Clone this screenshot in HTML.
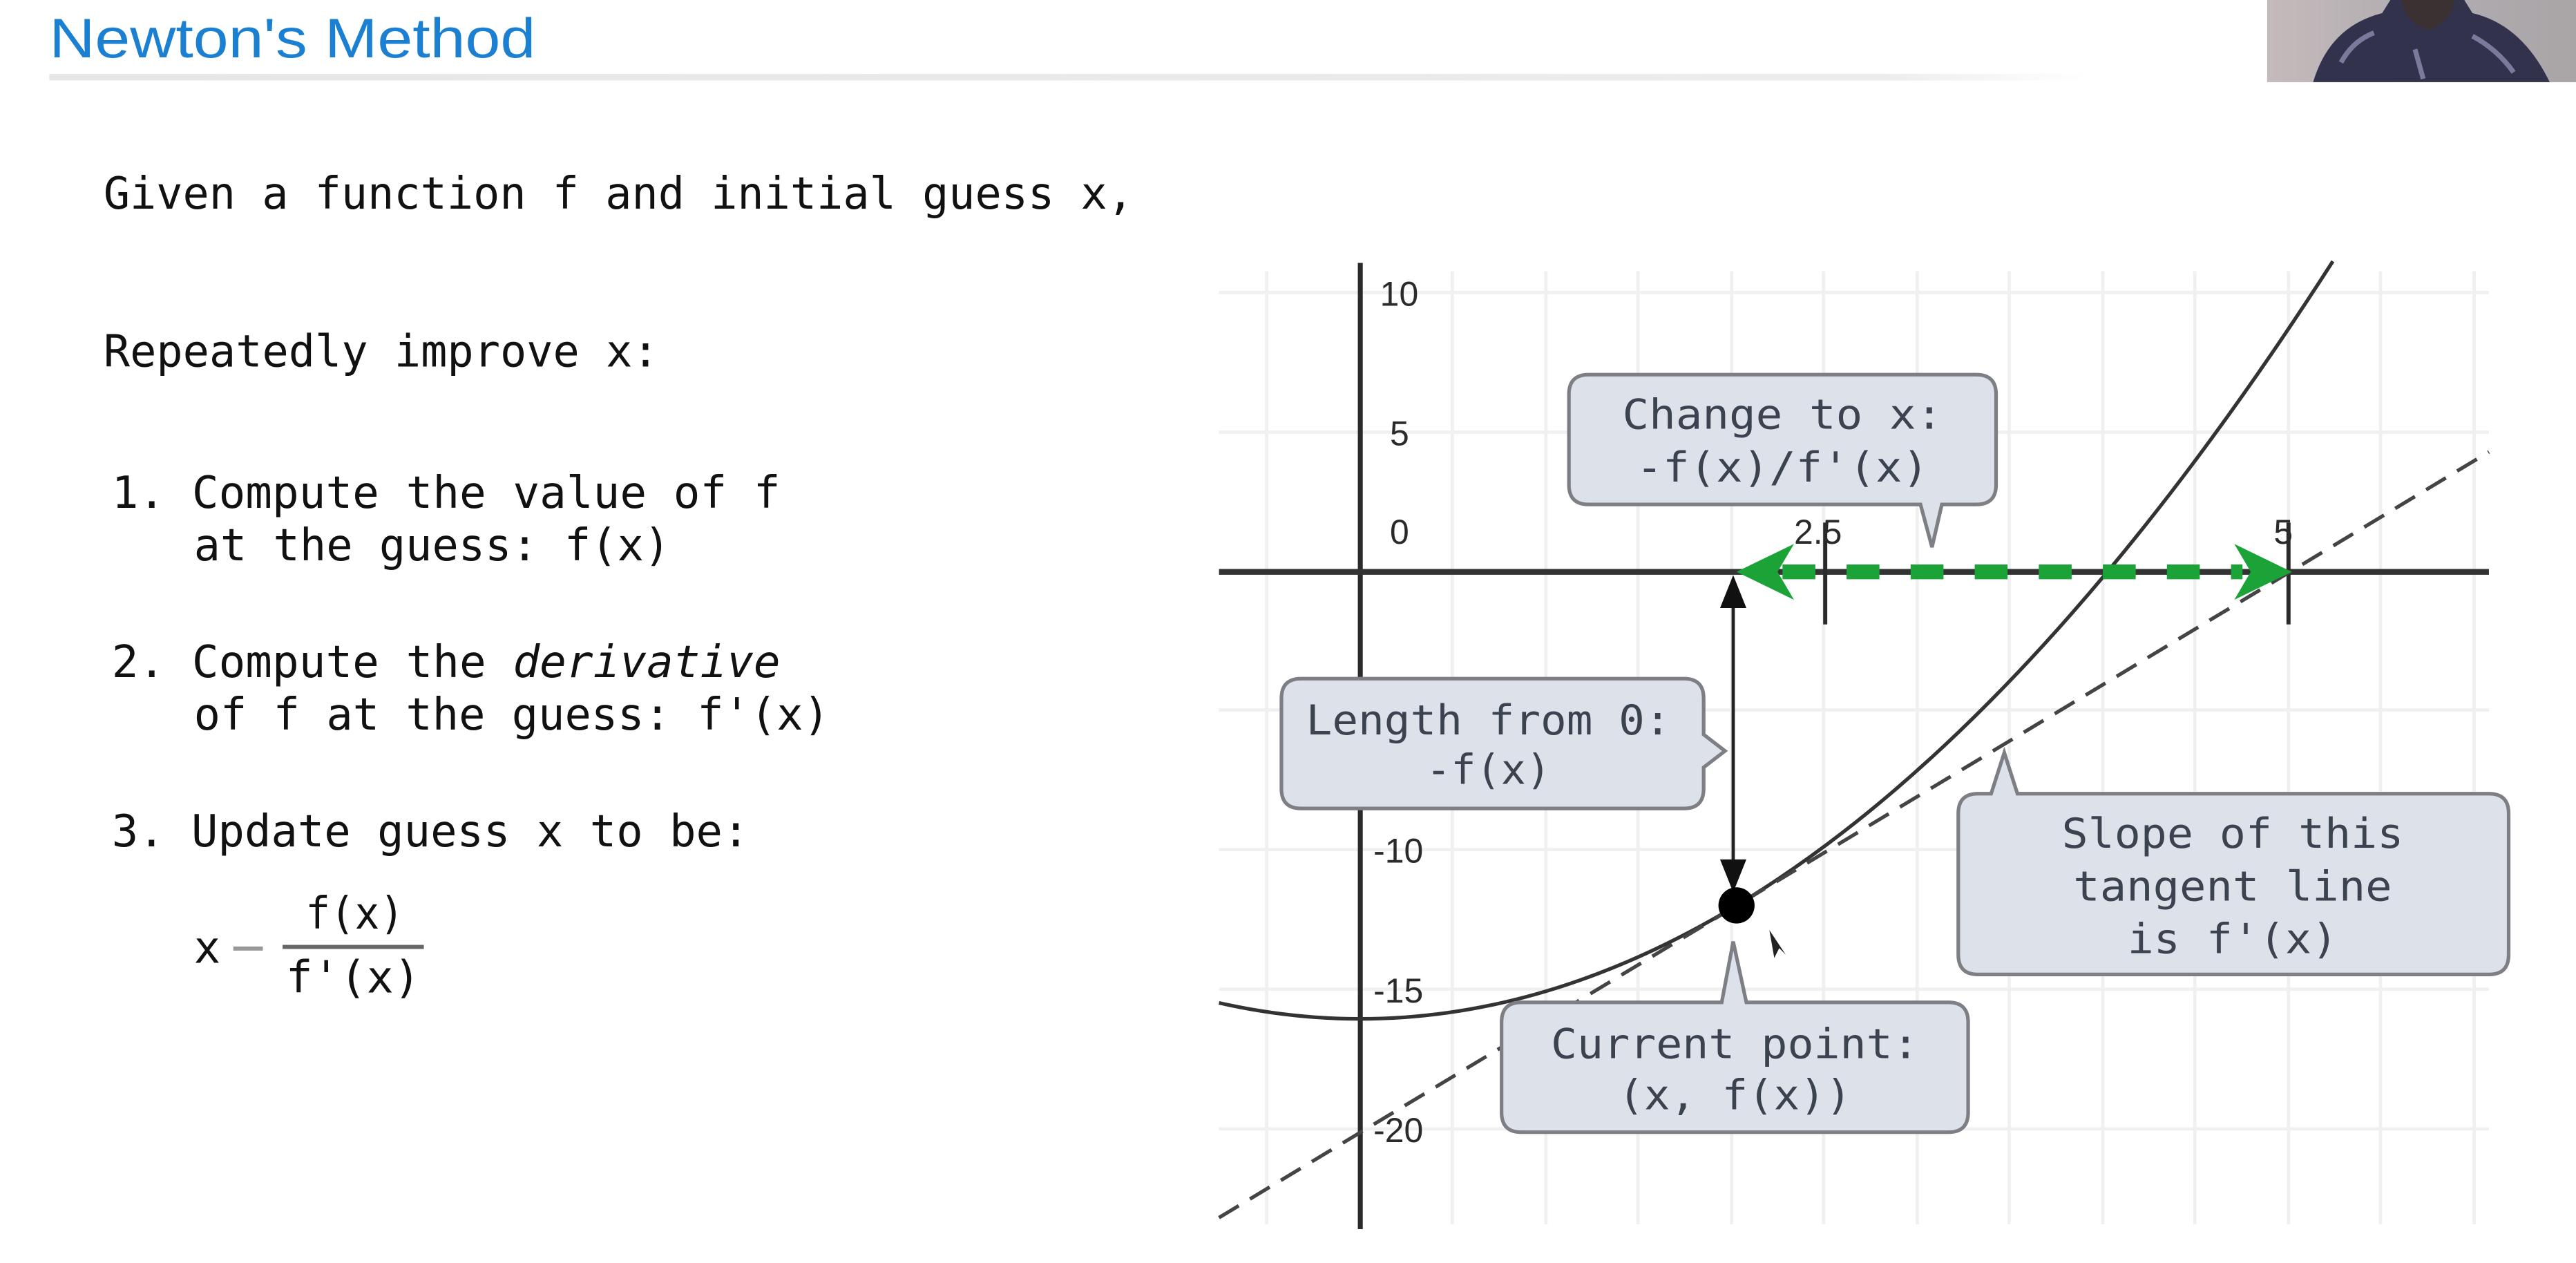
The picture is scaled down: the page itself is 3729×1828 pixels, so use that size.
<!DOCTYPE html>
<html><head><meta charset="utf-8"><style>
html,body{margin:0;padding:0;background:#fff;width:3729px;height:1828px;overflow:hidden}
svg{display:block}
.m{font-family:"DejaVu Sans Mono","Liberation Mono",monospace;fill:#111}
.b{font-family:"DejaVu Sans Mono","Liberation Mono",monospace;fill:#3c4350;font-size:25px}
.a{font-family:"Liberation Sans",sans-serif;fill:#2a2a2a;font-size:21px}
.box{fill:#dde1ea;stroke:#7d7f84;stroke-width:2.2}
</style></head><body>
<svg width="3729" height="1828" viewBox="0 0 1568 768.6" preserveAspectRatio="none" xmlns="http://www.w3.org/2000/svg">
<defs>
<linearGradient id="ln" x1="0" x2="1"><stop offset="0" stop-color="#e6e6e6"/><stop offset="0.9" stop-color="#ececec"/><stop offset="1" stop-color="#fff"/></linearGradient>
<linearGradient id="cam" x1="0" x2="1"><stop offset="0" stop-color="#c4babb"/><stop offset="0.5" stop-color="#b0acb0"/><stop offset="1" stop-color="#a9a5a7"/></linearGradient>
</defs>
<text x="30" y="35" font-family="Liberation Sans,sans-serif" font-size="34" fill="#1b7fd2" textLength="296" lengthAdjust="spacingAndGlyphs">Newton's Method</text>
<rect x="30" y="45" width="1240" height="4" fill="url(#ln)"/>
<rect x="1380" y="0" width="188" height="50" fill="url(#cam)"/>
<path d="M1455,0 H1500 L1505,8 Q1535,15 1552,50 H1408 Q1418,16 1450,8 Z" fill="#33324d"/>
<path d="M1462,0 H1494 Q1492,14 1478,18 Q1464,14 1462,0 Z" fill="#3b3132"/>
<path d="M1425,38 Q1432,25 1445,20 M1505,22 Q1520,30 1530,44 M1470,30 L1475,48" stroke="#7a7a9c" stroke-width="3" fill="none"/>
<g class="m" font-size="27">
<text x="63" y="127" textLength="627" lengthAdjust="spacingAndGlyphs">Given a function f and initial guess x,</text>
<text x="63" y="223" textLength="338" lengthAdjust="spacingAndGlyphs">Repeatedly improve x:</text>
<text x="68" y="309" textLength="407" lengthAdjust="spacingAndGlyphs">1. Compute the value of f</text>
<text x="118" y="341" textLength="290" lengthAdjust="spacingAndGlyphs">at the guess: f(x)</text>
<text x="68" y="412" textLength="407" lengthAdjust="spacingAndGlyphs">2. Compute the <tspan font-style="italic">derivative</tspan></text>
<text x="118" y="444" textLength="387" lengthAdjust="spacingAndGlyphs">of f at the guess: f'(x)</text>
<text x="68" y="515" textLength="388" lengthAdjust="spacingAndGlyphs">3. Update guess x to be:</text>
<text x="118" y="586">x</text>
<text x="186" y="565" textLength="60" lengthAdjust="spacingAndGlyphs">f(x)</text>
<text x="174" y="604" textLength="82" lengthAdjust="spacingAndGlyphs">f'(x)</text>
</g>
<rect x="142" y="576" width="18" height="2.5" fill="#999"/>
<rect x="172" y="575" width="86" height="2.5" fill="#666"/>
<g stroke="#f0f0f0" stroke-width="2">
<line x1="771" y1="165" x2="771" y2="745"/><line x1="884" y1="165" x2="884" y2="745"/><line x1="941" y1="165" x2="941" y2="745"/><line x1="997" y1="165" x2="997" y2="745"/><line x1="1054" y1="165" x2="1054" y2="745"/><line x1="1110" y1="165" x2="1110" y2="745"/><line x1="1167" y1="165" x2="1167" y2="745"/><line x1="1223" y1="165" x2="1223" y2="745"/><line x1="1280" y1="165" x2="1280" y2="745"/><line x1="1336" y1="165" x2="1336" y2="745"/><line x1="1393" y1="165" x2="1393" y2="745"/><line x1="1449" y1="165" x2="1449" y2="745"/><line x1="1506" y1="165" x2="1506" y2="745"/>
<line x1="742" y1="178" x2="1515" y2="178"/><line x1="742" y1="263" x2="1515" y2="263"/><line x1="742" y1="432" x2="1515" y2="432"/><line x1="742" y1="517" x2="1515" y2="517"/><line x1="742" y1="602" x2="1515" y2="602"/><line x1="742" y1="687" x2="1515" y2="687"/>
</g>
<line x1="828" y1="160" x2="828" y2="748" stroke="#2a2a2a" stroke-width="3"/>
<line x1="742" y1="348" x2="1515" y2="348" stroke="#333" stroke-width="3.5"/>
<line x1="1111" y1="318" x2="1111" y2="380" stroke="#2a2a2a" stroke-width="2.5"/>
<line x1="1393" y1="318" x2="1393" y2="380" stroke="#2a2a2a" stroke-width="2.5"/>
<g class="a">
<text x="840" y="186">10</text><text x="846" y="271">5</text><text x="846" y="331">0</text>
<text x="836" y="525">-10</text><text x="836" y="610">-15</text><text x="836" y="695">-20</text>
<text x="1092" y="331">2.5</text><text x="1384" y="331">5</text>
</g>
<path d="M742,610.3 Q1081,687 1420,159" fill="none" stroke="#333" stroke-width="2.2"/>
<line x1="742" y1="741" x2="1515" y2="275" stroke="#444" stroke-width="2.2" stroke-dasharray="14,8"/>
<line x1="1085" y1="348" x2="1365" y2="348" stroke="#1ba338" stroke-width="9" stroke-dasharray="20,19"/>
<path d="M1057,348 L1092,331 L1082,348 L1092,365 Z" fill="#1ba338"/>
<path d="M1395,348 L1360,331 L1370,348 L1360,365 Z" fill="#1ba338"/>
<line x1="1055" y1="365" x2="1055" y2="530" stroke="#222" stroke-width="2"/>
<path d="M1055,350 L1047,370 L1063,370 Z M1055,543 L1047,523 L1063,523 Z" fill="#111"/>
<circle cx="1057" cy="551" r="11" fill="#000"/>
<path d="M1077,566 L1080,583 L1083,577 L1087,581 Z" fill="#222"/>
<path class="box" d="M967,228 H1203 Q1215,228 1215,240 V295 Q1215,307 1203,307 H1182 L1176,333 L1169,307 H967 Q955,307 955,295 V240 Q955,228 967,228 Z"/>
<text class="b" x="1085" y="261" text-anchor="middle" textLength="195" lengthAdjust="spacingAndGlyphs">Change to x:</text>
<text class="b" x="1085" y="293" text-anchor="middle" textLength="178" lengthAdjust="spacingAndGlyphs">-f(x)/f'(x)</text>
<path class="box" d="M792,413 H1025 Q1037,413 1037,425 V447 L1050,457 L1037,467 V480 Q1037,492 1025,492 H792 Q780,492 780,480 V425 Q780,413 792,413 Z"/>
<text class="b" x="906" y="447" text-anchor="middle" textLength="222" lengthAdjust="spacingAndGlyphs">Length from 0:</text>
<text class="b" x="906" y="477" text-anchor="middle" textLength="76" lengthAdjust="spacingAndGlyphs">-f(x)</text>
<path class="box" d="M1204,483 H1212 L1220,458 L1228,483 H1515 Q1527,483 1527,495 V581 Q1527,593 1515,593 H1204 Q1192,593 1192,581 V495 Q1192,483 1204,483 Z"/>
<text class="b" x="1359" y="516" text-anchor="middle" textLength="208" lengthAdjust="spacingAndGlyphs">Slope of this</text>
<text class="b" x="1359" y="548" text-anchor="middle" textLength="194" lengthAdjust="spacingAndGlyphs">tangent line</text>
<text class="b" x="1359" y="580" text-anchor="middle" textLength="128" lengthAdjust="spacingAndGlyphs">is f'(x)</text>
<path class="box" d="M926,610 H1048 L1055,573 L1063,610 H1186 Q1198,610 1198,622 V677 Q1198,689 1186,689 H926 Q914,689 914,677 V622 Q914,610 926,610 Z"/>
<text class="b" x="1056" y="644" text-anchor="middle" textLength="224" lengthAdjust="spacingAndGlyphs">Current point:</text>
<text class="b" x="1056" y="675" text-anchor="middle" textLength="142" lengthAdjust="spacingAndGlyphs">(x, f(x))</text>
</svg>
</body></html>
